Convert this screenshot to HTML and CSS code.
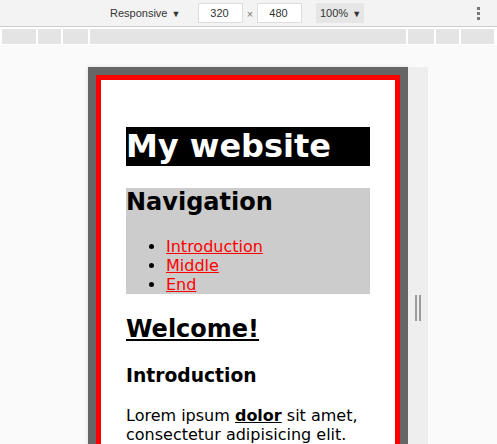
FILE: index.html
```html
<!DOCTYPE html>
<html lang="en">
<head>
  <meta charset="UTF-8">
  <meta name="viewport" content="width=device-width, initial-scale=1.0">
  <title>My website - device preview</title>
  <link rel="stylesheet" href="styles.css">
</head>
<body>
  <!-- Device toolbar -->
  <div class="toolbar">
    <span class="preset">Responsive <span class="caret">&#9660;</span></span>
    <span class="dim">320</span>
    <span class="times">&times;</span>
    <span class="dim">480</span>
    <span class="zoom">100% <span class="caret">&#9660;</span></span>
    <span class="menu">
      <i></i><i></i><i></i>
    </span>
  </div>

  <!-- Media query bars -->
  <div class="rulers">
    <div class="bar w34"></div>
    <div class="bar w23"></div>
    <div class="bar w25"></div>
    <div class="bar grow"></div>
    <div class="bar w26"></div>
    <div class="bar w23"></div>
    <div class="bar w33"></div>
  </div>

  <!-- Emulated viewport -->
  <div class="stage">
    <div class="device">
      <div class="page">
        <h1 class="site-title">My website</h1>

        <nav class="site-nav">
          <h2>Navigation</h2>
          <ul>
            <li><a href="#intro">Introduction</a></li>
            <li><a href="#middle">Middle</a></li>
            <li><a href="#end">End</a></li>
          </ul>
        </nav>

        <h2 class="welcome">Welcome!</h2>

        <h3 id="intro">Introduction</h3>
        <p>Lorem ipsum <strong class="key">dolor</strong> sit amet, consectetur adipisicing elit. Quisquam, voluptatibus, nobis iste eveniet dolores numquam.</p>
      </div>
      <div class="resize-handle"><i></i><i></i></div>
    </div>
  </div>
</body>
</html>
```

FILE: styles.css
```css
html, body {
  margin: 0;
  height: 444px;
  overflow: hidden;
}

body {
  background-color: #fafafa;
  font-family: "Liberation Sans", Arial, sans-serif;
  font-size: 11px;
  color: #333;
}

/* Toolbar */
.toolbar {
  height: 27px;
  background-color: #f3f3f3;
  border-bottom: 1px solid #cdcdcd;
  display: flex;
  align-items: center;
  padding-left: 110px;
  padding-right: 17px;
  box-sizing: border-box;
}

.preset {
  width: 88px;
}

.caret {
  font-size: 9px;
  margin-left: 1px;
}

.dim {
  width: 41px;
  height: 18px;
  line-height: 18px;
  border: 1px solid #ddd;
  background-color: #fff;
  text-align: center;
  padding-right: 2px;
}

.times {
  width: 14px;
  text-align: center;
  color: #777;
  padding-top: 2px;
}

.zoom {
  margin-left: 14px;
  width: 44px;
  height: 20px;
  line-height: 20px;
  padding-left: 4px;
  background-color: #e6e6e6;
  border-radius: 2px;
}

.menu {
  margin-left: auto;
  display: flex;
  flex-direction: column;
  gap: 2px;
}

.menu i {
  display: block;
  width: 3px;
  height: 3px;
  background-color: #777;
}

/* Media query bars */
.rulers {
  display: flex;
  gap: 2px;
  padding: 2px 3px 1px 2px;
  background-color: #fff;
}

.bar {
  height: 15px;
  background-color: #e4e4e4;
}

.w23 { width: 23px; }
.w25 { width: 25px; }
.w26 { width: 26px; }
.w33 { width: 33px; }
.w34 { width: 34px; }
.grow { flex: 1; }

/* Viewport area */
.stage {
  padding-top: 22px;
}

.device {
  position: relative;
  width: 320px;
  margin-left: 88px;
  background-color: #666;
  padding: 8px;
  box-sizing: border-box;
  box-shadow: 0 0 4px rgba(0, 0, 0, 0.12);
}

.resize-handle {
  position: absolute;
  top: 0;
  left: 100%;
  width: 20px;
  height: 500px;
  background-color: #eee;
}

.resize-handle i {
  position: absolute;
  top: 228px;
  width: 2px;
  height: 26px;
  background-color: #9a9a9a;
}

.resize-handle i:first-child { left: 7px; }
.resize-handle i:last-child { left: 11px; }

/* The page inside the device */
.page {
  border: 5px solid #f00;
  background-color: #fff;
  padding: 26px 25px 25px;
  font-family: "DejaVu Sans", Verdana, sans-serif;
  font-size: 16px;
  line-height: 19px;
  color: #000;
  min-height: 600px;
}

.site-title {
  background-color: #000;
  color: #fff;
  font-size: 32px;
  line-height: 39px;
  margin: 21px 0 22px;
}

.site-nav {
  background-color: #ccc;
}

.site-nav h2 {
  margin: 0 0 20px;
  font-size: 24px;
  line-height: 29px;
}

.site-nav ul {
  margin: 0 0 16px;
  padding-left: 40px;
}

.site-nav a {
  color: #f00;
}

.welcome {
  font-size: 24px;
  line-height: 29px;
  text-decoration: underline;
  margin: 21px 0 20px;
}

h3 {
  font-size: 18.72px;
  line-height: 23px;
  margin: 19px 0;
}

p {
  margin: 16px 0;
}

.key {
  text-decoration: underline;
}
```
